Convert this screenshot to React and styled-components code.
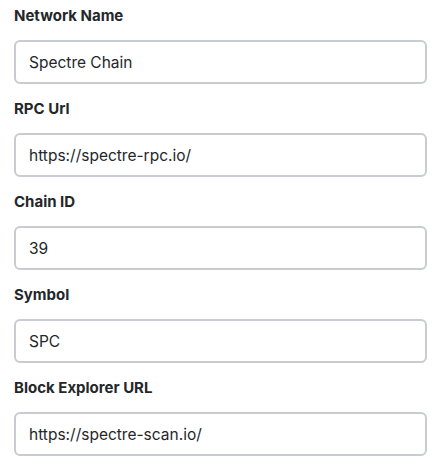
import React from "react";
import styled, { createGlobalStyle } from "styled-components";

/* ---------------- DATA ---------------- */

const fields = [
  { label: "Network Name", value: "Spectre Chain" },
  { label: "RPC Url", value: "https://spectre-rpc.io/" },
  { label: "Chain ID", value: "39" },
  { label: "Symbol", value: "SPC" },
  { label: "Block Explorer URL", value: "https://spectre-scan.io/" },
];

/* ---------------- COMPONENT ---------------- */

const App = () => (
  <>
    <GlobalStyle />
    <Form>
      {fields.map((f) => (
        <Field key={f.label}>
          <Label>{f.label}</Label>
          <Input defaultValue={f.value} />
        </Field>
      ))}
    </Form>
  </>
);

export default App;

/* ---------------- STYLES ---------------- */

const GlobalStyle = createGlobalStyle`
  body {
    margin: 0;
    background: #ffffff;
    font-family: Inter, "Noto Sans", sans-serif;
    color: #24272a;
  }
`;

const Form = styled.div`
  display: flex;
  flex-direction: column;
  gap: 14px;
  padding: 5px 13px 0 14px;
`;

const Field = styled.label`
  display: flex;
  flex-direction: column;
  gap: 13px;
`;

const Label = styled.span`
  font-size: 15px;
  line-height: 22px;
  font-weight: 700;
  color: #24272a;
`;

const Input = styled.input`
  box-sizing: border-box;
  height: 44px;
  width: 100%;
  padding: 0 13px;
  border: 2px solid #c8ccd0;
  border-radius: 6px;
  background: #fff;
  font-family: Inter, "Noto Sans", sans-serif;
  font-size: 15.5px;
  color: #24272a;
  outline: none;
`;
